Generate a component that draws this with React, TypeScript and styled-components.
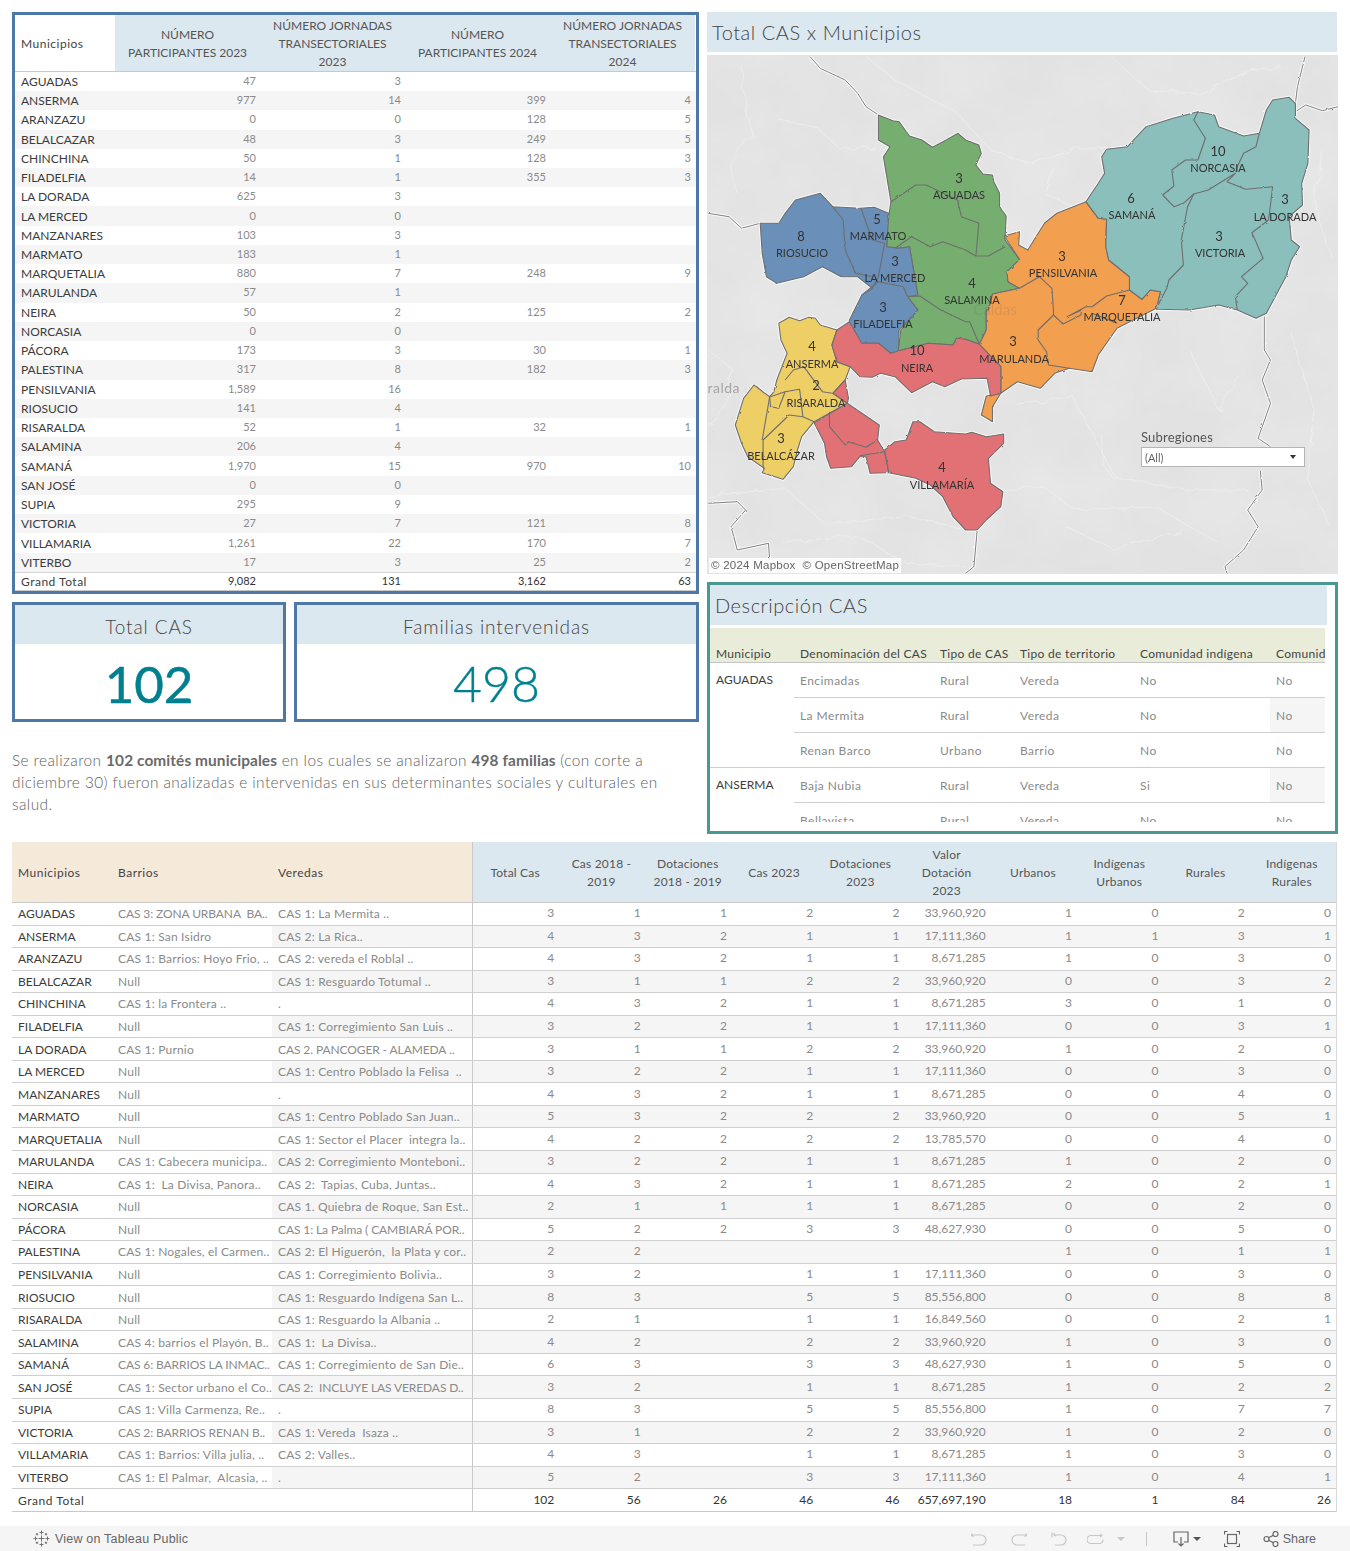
import React from 'react';
import styled, { createGlobalStyle } from 'styled-components';

const FONT = `Lato, "Open Sans", "Liberation Sans", sans-serif`;

const Global = createGlobalStyle`
  html, body { margin: 0; padding: 0; background: #fff; }
  body { font-family: ${FONT}; }
  #root { width: 1350px; height: 1551px; overflow: hidden; }
`;

const Page = styled.div`
  width: 1350px;
  height: 1551px;
  background: #fff;
  display: flex;
  flex-direction: column;
`;
const Content = styled.div`
  padding: 12px 12px 0 12px;
  flex: none;
`;
const TopGrid = styled.div`
  display: grid;
  grid-template-columns: 687px 631px;
  column-gap: 8px;
`;
const LeftColumn = styled.div`
  display: flex;
  flex-direction: column;
  gap: 8px;
`;
const RightColumn = styled.div`
  display: flex;
  flex-direction: column;
`;

/* ---------- participants table ---------- */
const BluePanel = styled.div`
  border: 3px solid #4e79a7;
  box-sizing: border-box;
  height: 582px;
  display: flex;
  flex-direction: column;
`;
const PartHeader = styled.div`
  display: grid;
  grid-template-columns: 100px repeat(4, 145px);
  height: 56.8px;
  border-bottom: 1px solid #c9c9c9;
  box-sizing: border-box;
  flex: none;
`;
const PartCorner = styled.div`
  display: flex;
  align-items: center;
  padding-left: 6px;
  font-size: 12px;
  letter-spacing: 0.5px;
  color: #444;
`;
const PartHeadCell = styled.div`
  background: #dce8ef;
  display: flex;
  align-items: center;
  justify-content: center;
  text-align: center;
  font-size: 12px;
  line-height: 18px;
  color: #555;
  padding-top: 2px;
  box-sizing: border-box;
`;
const PartRow = styled.div<{ $alt: boolean }>`
  display: grid;
  grid-template-columns: 100px repeat(4, 145px);
  height: 19.24px;
  flex: none;
  background: ${p => (p.$alt ? '#f5f5f5' : '#fff')};
  align-items: center;
`;
const PartName = styled.div<{ $total?: boolean }>`
  padding-left: 6px;
  font-size: 12px;
  letter-spacing: ${p => (p.$total ? '0.5px' : '0')};
  color: #3c3c3c;
  white-space: nowrap;
`;
const PartNum = styled.div`
  text-align: right;
  padding-right: 4px;
  padding-bottom: 2px;
  font-size: 11px;
  color: #8a8a8a;
`;
const PartTotal = styled.div`
  display: grid;
  grid-template-columns: 100px repeat(4, 145px);
  height: 19px;
  flex: none;
  align-items: center;
  border-top: 1px solid #d4d4d4;
  border-bottom: 1px solid #c9c9c9;
  box-sizing: border-box;
`;
const PartTotalNum = styled(PartNum)`
  color: #333;
`;

/* ---------- KPI ---------- */
const KpiRow = styled.div`
  display: grid;
  grid-template-columns: 274px 405px;
  column-gap: 8px;
`;
const KpiCard = styled.div`
  border: 3px solid #4e79a7;
  box-sizing: border-box;
  height: 120px;
  display: flex;
  flex-direction: column;
`;
const KpiTitle = styled.div`
  height: 39px;
  padding-top: 4px;
  box-sizing: border-box;
  background: #dce8ef;
  display: flex;
  align-items: center;
  justify-content: center;
  font-size: 19px;
  font-weight: 300;
  color: #444;
  letter-spacing: 0.9px;
`;
const KpiValue = styled.div<{ $strong?: boolean }>`
  flex: 1;
  display: flex;
  align-items: center;
  justify-content: center;
  padding-top: 3px;
  font-size: ${p => (p.$strong ? 51 : 50)}px;
  color: #00808f;
  font-weight: ${p => (p.$strong ? 400 : 300)};
  -webkit-text-stroke: ${p => (p.$strong ? '0.5px #00808f' : '0.4px #00808f')};
`;
const Paragraph = styled.p`
  margin: 19px 0 0;
  font-size: 15.4px;
  font-weight: 300;
  line-height: 22px;
  letter-spacing: 0.42px;
  color: #606060;
  b { font-weight: 700; color: #6a6a6a; letter-spacing: 0.1px; }
`;

/* ---------- map ---------- */
const TitleBar = styled.div`
  height: 40px;
  background: #dce8ef;
  display: flex;
  align-items: center;
  padding-left: 5px;
  font-size: 20px;
  font-weight: 300;
  color: #444;
  letter-spacing: 0.55px;
  margin-right: 1px;
`;
const MapFrame = styled.div`
  position: relative;
  height: 519px;
  margin-top: 3px;
  background: #e4e4e4;
  overflow: hidden;
`;
const MapSvg = styled.svg`
  display: block;
  width: 631px;
  height: 519px;
`;
const FilterBox = styled.div`
  position: absolute;
  left: 434px;
  top: 374px;
  width: 164px;
`;
const FilterLabel = styled.div`
  font-size: 13px;
  color: #555;
  line-height: 17px;
  margin-bottom: 1px;
  letter-spacing: 0.2px;
`;
const FilterSelect = styled.div`
  height: 20px;
  border: 1px solid #b4b4b4;
  background: #fff;
  box-sizing: border-box;
  display: flex;
  align-items: center;
  justify-content: space-between;
  padding: 0 8px 0 3px;
  font-size: 11px;
  color: #666;
`;
const Caret = styled.span`
  width: 0;
  height: 0;
  border-left: 3.5px solid transparent;
  border-right: 3.5px solid transparent;
  border-top: 4px solid #333;
`;
const Attribution = styled.div`
  position: absolute;
  left: 2px;
  bottom: 1px;
  height: 15px;
  line-height: 15px;
  padding: 0 2px;
  background: rgba(255, 255, 255, 0.85);
  font-family: "Liberation Sans", Arial, sans-serif;
  font-size: 11.5px;
  letter-spacing: 0.25px;
  color: #666;
  white-space: pre;
`;

/* ---------- description ---------- */
const TealPanel = styled.div`
  margin-top: 8px;
  height: 252px;
  border: 3px solid #499894;
  box-sizing: border-box;
  display: flex;
  flex-direction: column;
`;
const DescTitle = styled.div`
  height: 40px;
  width: 617px;
  background: #dce8ef;
  display: flex;
  align-items: center;
  padding-left: 5px;
  padding-bottom: 1px;
  box-sizing: border-box;
  font-size: 20px;
  font-weight: 300;
  color: #444;
  letter-spacing: 0.55px;
  flex: none;
`;
const DescViewport = styled.div`
  margin-top: 3px;
  width: 615px;
  height: 194px;
  overflow: hidden;
  flex: none;
`;
const DescHead = styled.div`
  display: grid;
  grid-template-columns: 84px 140px 80px 120px 136px 55px;
  height: 35px;
  background: #e8ecd9;
  border-bottom: 1px solid #c4c4c4;
  box-sizing: border-box;
  align-items: end;
`;
const DescHeadCell = styled.div`
  padding: 0 0 0 6px;
  font-size: 12px;
  line-height: 16px;
  letter-spacing: 0.3px;
  color: #444;
  white-space: nowrap;
  overflow: hidden;
`;
const DescGroup = styled.div`
  display: grid;
  grid-template-columns: 84px 531px;
  border-bottom: 1px solid #cfcfcf;
`;
const DescMuni = styled.div`
  padding: 9px 0 0 6px;
  font-size: 12px;
  line-height: 16px;
  color: #3c3c3c;
`;
const DescLine = styled.div`
  display: grid;
  grid-template-columns: 140px 80px 120px 136px 55px;
  height: 35px;
  box-sizing: border-box;
  border-bottom: 1px solid #cfcfcf;
  &:last-child { border-bottom: none; height: 34px; }
`;
const DescCell = styled.div<{ $shade?: boolean }>`
  display: flex;
  align-items: center;
  padding-left: 6px;
  font-size: 12px;
  letter-spacing: 0.45px;
  color: #8a8a8a;
  background: ${p => (p.$shade ? '#f5f5f5' : 'transparent')};
  white-space: nowrap;
`;

/* ---------- bottom table ---------- */
const BigTable = styled.div`
  margin-top: 8px;
  width: 1325px;
  border-bottom: 1px solid #c9c9c9;
  border-right: 1px solid #d9d9d9;
  box-sizing: border-box;
`;
const BIG_COLS = '100px 160px 200px 1px repeat(10, 86.3px)';
const BigHead = styled.div`
  display: grid;
  grid-template-columns: ${BIG_COLS};
  height: 61px;
  border-bottom: 1px solid #c9c9c9;
  box-sizing: border-box;
`;
const BigHeadDim = styled.div`
  background: #f5e9d9;
  display: flex;
  align-items: center;
  padding-left: 6px;
  font-size: 12px;
  letter-spacing: 0.5px;
  color: #444;
`;
const BigHeadMeasure = styled.div`
  background: #dce8ef;
  display: flex;
  align-items: center;
  justify-content: center;
  text-align: center;
  padding: 2px 4px 0 2px;
  font-size: 12px;
  line-height: 18px;
  letter-spacing: 0.2px;
  color: #555;
  white-space: nowrap;
  box-sizing: border-box;
`;
const VRule = styled.div`
  background: #c9c9c9;
`;
const BigRow = styled.div`
  display: grid;
  grid-template-columns: ${BIG_COLS};
  height: 22.56px;
  box-sizing: border-box;
  border-bottom: 1px solid #cfcfcf;
`;
const BigName = styled.div<{ $total?: boolean }>`
  display: flex;
  align-items: center;
  padding-left: 6px;
  font-size: 12px;
  letter-spacing: ${p => (p.$total ? '0.55px' : '0')};
  color: #3c3c3c;
  white-space: pre;
  overflow: hidden;
`;
const BigText = styled.div<{ $shade?: boolean; $caps?: boolean }>`
  display: flex;
  align-items: center;
  padding-left: 6px;
  font-size: 12px;
  letter-spacing: ${p => (p.$caps ? '-0.1px' : '0.2px')};
  color: #8a8a8a;
  white-space: pre;
  overflow: hidden;
  background: ${p => (p.$shade ? '#f5f5f5' : 'transparent')};
`;
const BigNum = styled.div<{ $shade?: boolean }>`
  display: flex;
  align-items: center;
  justify-content: flex-end;
  padding-right: 5px;
  padding-bottom: 2px;
  font-size: 12px;
  color: #8a8a8a;
  background: ${p => (p.$shade ? '#f5f5f5' : 'transparent')};
`;
const BigTotalRow = styled.div`
  display: grid;
  grid-template-columns: ${BIG_COLS};
  height: 22px;
  box-sizing: border-box;
`;
const BigTotalLabel = styled(BigName)`
  grid-column: span 3;
`;
const BigTotalNum = styled(BigNum)`
  color: #333;
`;

/* ---------- footer ---------- */
const Footer = styled.div`
  margin-top: 14px;
  height: 26px;
  background: #f5f5f5;
  display: flex;
  align-items: center;
  justify-content: space-between;
  padding: 0 34px 1px 33px;
  box-sizing: border-box;
  flex: none;
`;
const FooterLink = styled.div`
  display: flex;
  align-items: center;
  gap: 5px;
  font-family: "Liberation Sans", Arial, sans-serif;
  font-size: 12.5px;
  letter-spacing: 0.2px;
  color: #666;
`;
const FooterTools = styled.div`
  display: flex;
  align-items: center;
`;
const Tool = styled.span<{ $gap: number; $dark?: boolean }>`
  display: flex;
  margin-left: ${p => p.$gap}px;
  color: ${p => (p.$dark ? '#666' : '#c8c8c8')};
`;
const ToolCaret = styled.span<{ $dark?: boolean }>`
  margin-left: ${p => (p.$dark ? 4 : 13)}px;
  width: 0;
  height: 0;
  border-left: 4px solid transparent;
  border-right: 4px solid transparent;
  border-top: 4px solid ${p => (p.$dark ? '#555' : '#c8c8c8')};
`;
const Divider = styled.span`
  margin-left: 21px;
  width: 1px;
  height: 14px;
  background: #c8c8c8;
`;
const ShareText = styled.span`
  margin-left: 4px;
  font-family: "Liberation Sans", Arial, sans-serif;
  font-size: 12.5px;
  color: #666;
`;

/* ---------- data ---------- */
const partRows: string[][] = [
  ['AGUADAS', '47', '3', '', ''],
  ['ANSERMA', '977', '14', '399', '4'],
  ['ARANZAZU', '0', '0', '128', '5'],
  ['BELALCAZAR', '48', '3', '249', '5'],
  ['CHINCHINA', '50', '1', '128', '3'],
  ['FILADELFIA', '14', '1', '355', '3'],
  ['LA DORADA', '625', '3', '', ''],
  ['LA MERCED', '0', '0', '', ''],
  ['MANZANARES', '103', '3', '', ''],
  ['MARMATO', '183', '1', '', ''],
  ['MARQUETALIA', '880', '7', '248', '9'],
  ['MARULANDA', '57', '1', '', ''],
  ['NEIRA', '50', '2', '125', '2'],
  ['NORCASIA', '0', '0', '', ''],
  ['PÁCORA', '173', '3', '30', '1'],
  ['PALESTINA', '317', '8', '182', '3'],
  ['PENSILVANIA', '1,589', '16', '', ''],
  ['RIOSUCIO', '141', '4', '', ''],
  ['RISARALDA', '52', '1', '32', '1'],
  ['SALAMINA', '206', '4', '', ''],
  ['SAMANÁ', '1,970', '15', '970', '10'],
  ['SAN JOSÉ', '0', '0', '', ''],
  ['SUPIA', '295', '9', '', ''],
  ['VICTORIA', '27', '7', '121', '8'],
  ['VILLAMARIA', '1,261', '22', '170', '7'],
  ['VITERBO', '17', '3', '25', '2'],
];
const partHeads = [
  ['NÚMERO', 'PARTICIPANTES 2023'],
  ['NÚMERO JORNADAS', 'TRANSECTORIALES', '2023'],
  ['NÚMERO', 'PARTICIPANTES 2024'],
  ['NÚMERO JORNADAS', 'TRANSECTORIALES', '2024'],
];

const descGroups = [
  {
    name: 'AGUADAS',
    lines: [
      ['Encimadas', 'Rural', 'Vereda', 'No', 'No', ''],
      ['La Mermita', 'Rural', 'Vereda', 'No', 'No', 's'],
      ['Renan Barco', 'Urbano', 'Barrio', 'No', 'No', ''],
    ],
  },
  {
    name: 'ANSERMA',
    lines: [
      ['Baja Nubia', 'Rural', 'Vereda', 'Si', 'No', 's'],
      ['Bellavista', 'Rural', 'Vereda', 'No', 'No', ''],
    ],
  },
];

const bigHeads = [
  ['Total Cas'],
  ['Cas 2018 -', '2019'],
  ['Dotaciones', '2018 - 2019'],
  ['Cas 2023'],
  ['Dotaciones', '2023'],
  ['Valor', 'Dotación', '2023'],
  ['Urbanos'],
  ['Indígenas', 'Urbanos'],
  ['Rurales'],
  ['Indígenas', 'Rurales'],
];
const bigRows: string[][] = [
  ['AGUADAS', 'CAS 3: ZONA URBANA  BA..', 'CAS 1: La Mermita ..', '3', '1', '1', '2', '2', '33,960,920', '1', '0', '2', '0'],
  ['ANSERMA', 'CAS 1: San Isidro', 'CAS 2: La Rica..', '4', '3', '2', '1', '1', '17,111,360', '1', '1', '3', '1'],
  ['ARANZAZU', 'CAS 1: Barrios: Hoyo Frio, ..', 'CAS 2: vereda el Roblal ..', '4', '3', '2', '1', '1', '8,671,285', '1', '0', '3', '0'],
  ['BELALCAZAR', 'Null', 'CAS 1: Resguardo Totumal ..', '3', '1', '1', '2', '2', '33,960,920', '0', '0', '3', '2'],
  ['CHINCHINA', 'CAS 1: la Frontera ..', '.', '4', '3', '2', '1', '1', '8,671,285', '3', '0', '1', '0'],
  ['FILADELFIA', 'Null', 'CAS 1: Corregimiento San Luis ..', '3', '2', '2', '1', '1', '17,111,360', '0', '0', '3', '1'],
  ['LA DORADA', 'CAS 1: Purnio', 'CAS 2. PANCOGER - ALAMEDA ..', '3', '1', '1', '2', '2', '33,960,920', '1', '0', '2', '0'],
  ['LA MERCED', 'Null', 'CAS 1: Centro Poblado la Felisa  ..', '3', '2', '2', '1', '1', '17,111,360', '0', '0', '3', '0'],
  ['MANZANARES', 'Null', '.', '4', '3', '2', '1', '1', '8,671,285', '0', '0', '4', '0'],
  ['MARMATO', 'Null', 'CAS 1: Centro Poblado San Juan..', '5', '3', '2', '2', '2', '33,960,920', '0', '0', '5', '1'],
  ['MARQUETALIA', 'Null', 'CAS 1: Sector el Placer  integra la..', '4', '2', '2', '2', '2', '13,785,570', '0', '0', '4', '0'],
  ['MARULANDA', 'CAS 1: Cabecera municipa..', 'CAS 2: Corregimiento Monteboni..', '3', '2', '2', '1', '1', '8,671,285', '1', '0', '2', '0'],
  ['NEIRA', 'CAS 1:  La Divisa, Panora..', 'CAS 2:  Tapias, Cuba, Juntas..', '4', '3', '2', '1', '1', '8,671,285', '2', '0', '2', '1'],
  ['NORCASIA', 'Null', 'CAS 1. Quiebra de Roque, San Est..', '2', '1', '1', '1', '1', '8,671,285', '0', '0', '2', '0'],
  ['PÁCORA', 'Null', 'CAS 1: La Palma ( CAMBIARÁ POR..', '5', '2', '2', '3', '3', '48,627,930', '0', '0', '5', '0'],
  ['PALESTINA', 'CAS 1: Nogales, el Carmen..', 'CAS 2: El Higuerón,  la Plata y cor..', '2', '2', '', '', '', '', '1', '0', '1', '1'],
  ['PENSILVANIA', 'Null', 'CAS 1: Corregimiento Bolivia..', '3', '2', '', '1', '1', '17,111,360', '0', '0', '3', '0'],
  ['RIOSUCIO', 'Null', 'CAS 1: Resguardo Indígena San L..', '8', '3', '', '5', '5', '85,556,800', '0', '0', '8', '8'],
  ['RISARALDA', 'Null', 'CAS 1: Resguardo la Albania ..', '2', '1', '', '1', '1', '16,849,560', '0', '0', '2', '1'],
  ['SALAMINA', 'CAS 4: barrios el Playón, B..', 'CAS 1:  La Divisa..', '4', '2', '', '2', '2', '33,960,920', '1', '0', '3', '0'],
  ['SAMANÁ', 'CAS 6: BARRIOS LA INMAC..', 'CAS 1: Corregimiento de San Die..', '6', '3', '', '3', '3', '48,627,930', '1', '0', '5', '0'],
  ['SAN JOSÉ', 'CAS 1: Sector urbano el Co..', 'CAS 2:  INCLUYE LAS VEREDAS D..', '3', '2', '', '1', '1', '8,671,285', '1', '0', '2', '2'],
  ['SUPIA', 'CAS 1: Villa Carmenza, Re..', '.', '8', '3', '', '5', '5', '85,556,800', '1', '0', '7', '7'],
  ['VICTORIA', 'CAS 2: BARRIOS RENAN B..', 'CAS 1: Vereda  Isaza ..', '3', '1', '', '2', '2', '33,960,920', '1', '0', '2', '0'],
  ['VILLAMARIA', 'CAS 1: Barrios: Villa julia, ..', 'CAS 2: Valles..', '4', '3', '', '1', '1', '8,671,285', '1', '0', '3', '0'],
  ['VITERBO', 'CAS 1: El Palmar,  Alcasia, ..', '.', '5', '2', '', '3', '3', '17,111,360', '1', '0', '4', '1'],
];
const bigTotal = ['102', '56', '26', '46', '46', '657,697,190', '18', '1', '84', '26'];
const isCaps = (s: string) => /[A-ZÁ]{4}/.test(s);

/* ---------- map drawing: traced points, N/S select the source band ---------- */
const pts = (s: string) => {
  let oy = 50;
  return s
    .trim()
    .split(/\s+/)
    .flatMap(tok => {
      if (tok === 'N') { oy = 50; return []; }
      if (tok === 'S') { oy = 310; return []; }
      const [x, y] = tok.split(',').map(Number);
      return [`${(700 + x / 2.41).toFixed(1)},${(oy + y / 3).toFixed(1)}`];
    })
    .join(' ');
};

const regions = [
  {
    fill: '#76ae6f',
    outer: `N 430,195 465,212 480,215 505,258 535,270 560,292 590,272 622,250 640,270 672,285 678,310 665,345 682,372 705,375 708,395 722,430 722,470 738,498 735,570 770,628 740,665 742,695 770,715 705,732 695,780 S 690,0 690,60 673,103 640,88 618,85 610,105 550,100 478,122 484,60 525,0 N 525,780 500,740 525,735 505,590 480,595 450,590 452,520 460,455 442,320 458,290 430,270`,
    lines: [
      `N 460,455 520,405 545,405 620,450 630,500 672,520 665,618`,
      `N 470,595 510,560 555,590 585,575 640,600 665,618 695,618 735,590`,
      `N 500,740 530,738 580,780 S 640,35 650,35 673,103`,
    ],
  },
  {
    fill: '#6a8fb8',
    outer: `N 145,520 190,520 205,490 230,450 290,430 320,470 385,475 420,472 455,490 450,590 480,595 505,590 525,735 500,740 525,780 S 525,0 480,60 478,122 460,130 430,100 390,100 360,50 360,30 N 390,735 415,715 380,680 340,680 295,650 250,680 185,700 160,680 150,610`,
    lines: [
      `N 320,470 345,510 350,600 375,670 415,680`,
      `N 388,475 415,570 445,580 430,680 415,715`,
      `N 390,735 430,695 490,710 500,740`,
    ],
  },
  {
    fill: '#f29f4f',
    outer: `N 733,558 770,545 768,585 790,600 830,520 860,490 930,455 960,505 980,508 978,590 985,630 1035,680 1035,720 1065,748 1085,720 1110,725 1100,775 S 1005,55 960,135 945,185 890,175 855,190 820,235 765,215 725,250 705,290 705,335 678,315 690,258 725,250 725,170 673,103 690,60 690,0 N 695,780 705,732 770,715 742,695 740,665 770,628`,
    lines: [
      `N 770,715 818,680 848,715 852,780 S 852,15 815,60 815,90 835,125 840,165 890,175`,
      `S 852,15 875,42 918,15 920,0 N 885,800 930,770 945,770 980,738 1035,720`,
      `S 945,10 1005,40`,
    ],
  },
  {
    fill: '#8bbfbb',
    outer: `N 930,455 960,400 975,370 968,320 980,298 1030,290 1075,230 1140,205 1200,185 1240,195 1250,230 1310,258 1348,250 1365,180 1380,150 1420,142 1435,160 1435,205 1468,240 1465,340 1450,400 1452,465 1420,500 1425,570 1445,590 1425,630 1412,680 1395,720 1365,790 1340,805 1295,780 1250,765 1180,780 1100,778 1110,725 1085,720 1065,748 1035,720 1035,680 985,630 978,590 980,508 960,505`,
    lines: [
      `N 1200,185 1190,210 1218,265 1200,330 1170,330 1137,360 1142,408 1115,435 1142,470 1165,460 1190,432 1225,420 1290,370 1270,395 1315,418 1380,410 1375,465 1370,510 1330,548 1357,625 1305,680 1320,700 1290,740 1295,780`,
      `N 1348,250 1340,290 1310,310 1295,350 1290,370`,
      `N 1190,432 1175,470 1160,570 1165,645 1130,690 1125,715 1100,775`,
    ],
  },
  {
    fill: '#eecf66',
    outer: `S 190,40 215,22 240,32 262,22 278,25 290,45 330,60 318,105 330,155 362,170 350,210 320,250 355,280 275,335 245,380 235,420 225,470 200,508 150,488 155,475 115,440 100,400 85,345 105,265 130,225 168,260 178,245 185,210 210,130 195,90`,
    lines: [
      `S 170,260 205,245 240,238 248,320 275,335`,
      `S 168,260 170,290 190,295 205,245`,
      `S 205,210 225,180 250,170 295,245 318,250`,
      `S 215,315 248,320`,
      `S 215,315 152,390 152,470 155,478`,
      `S 168,260 150,390`,
    ],
  },
  {
    fill: '#e27175',
    outer: `S 318,105 330,60 360,35 390,100 430,100 460,130 480,122 550,100 610,105 618,85 640,88 673,103 725,170 725,250 700,258 692,205 630,207 590,230 560,215 510,248 470,200 435,190 415,202 385,200 362,170 330,155`,
    lines: [],
  },
  {
    fill: '#e27175',
    outer: `S 350,210 358,265 355,280 400,318 432,345 428,390 445,425 455,488 410,490 400,440 385,440 365,470 315,475 305,440 300,400 275,338 355,280 320,250`,
    lines: [
      `S 312,305 312,350 350,405 358,395 400,412 428,390`,
      `S 385,437 445,425`,
    ],
  },
  {
    fill: '#e27175',
    outer: `S 445,420 470,395 497,390 513,335 530,335 565,365 640,372 655,367 690,380 732,372 732,400 695,445 700,520 730,545 725,590 690,630 668,660 640,660 610,620 585,560 555,525 520,505 455,488`,
    lines: [],
  },
];

const borders = [
  `N 265,20 290,55 350,90 380,130 400,170 430,195`,
  `N 20,490 70,500 100,535 145,520`,
  `N 1458,20 1440,110 1435,160`,
  `N 1435,185 1460,165 1500,182 1538,170`,
  `S 1360,20 1360,120 1375,150 1355,210 1375,280 1345,385 1375,410`,
  `S 1350,480 1355,540 1320,600 1345,650 1310,720 1265,770 1270,790`,
  `S 20,580 90,575 110,600 75,650 90,720 165,700 168,750`,
  `S 668,660 660,770 640,790`,
];
const rivers = [
  `N 100,40 110,180 130,260 70,330 90,430`,
  `N 400,20 470,90 620,190 700,300 800,340 900,300 980,290`,
  `N 1000,30 1080,120 1200,130 1320,60 1400,50`,
  `N 190,210 280,230 340,300 420,290`,
  `N 850,350 830,430 900,470`,
  `N 1500,300 1480,450 1520,620`,
  `S 20,120 80,180 60,300 20,350`,
  `S 20,560 120,545 200,530 300,640 500,620 640,660`,
  `S 200,700 380,680 500,760 640,770`,
  `S 760,280 900,260 1000,500 1180,540 1320,540`,
  `S 730,540 830,530 900,600 1100,590 1250,700`,
  `S 970,380 975,470 1000,510`,
  `S 1180,120 1250,300 1300,200`,
  `S 1420,60 1480,300 1460,500 1520,650`,
  `S 880,650 1000,720 1170,660`,
];

const labels: [string, string, number, number, number, number][] = [
  ['3', 'AGUADAS', 959, 178, 959, 195],
  ['8', 'RIOSUCIO', 801, 236, 802, 253],
  ['5', 'MARMATO', 877, 219, 878, 236],
  ['3', 'LA MERCED', 895, 261, 895, 278],
  ['4', 'SALAMINA', 972, 283, 972, 300],
  ['3', 'FILADELFIA', 883, 307, 883, 324],
  ['3', 'PENSILVANIA', 1062, 256, 1063, 273],
  ['7', 'MARQUETALIA', 1122, 300, 1122, 317],
  ['3', 'MARULANDA', 1013, 341, 1014, 359],
  ['10', 'NORCASIA', 1218, 151, 1218, 168],
  ['6', 'SAMANÁ', 1131, 198, 1132, 215],
  ['3', 'LA DORADA', 1285, 199, 1285, 217],
  ['3', 'VICTORIA', 1219, 236, 1220, 253],
  ['4', 'ANSERMA', 812, 346, 812, 364],
  ['2', 'RISARALDA', 816, 385, 816, 403],
  ['3', 'BELALCÁZAR', 781, 438, 781, 456],
  ['10', 'NEIRA', 917, 350, 917, 368],
  ['4', 'VILLAMARÍA', 942, 467, 942, 485],
];

const MapDrawing = () => (
  <MapSvg viewBox="707 55 631 519">
    <defs>
      <filter id="wiggle" filterUnits="userSpaceOnUse" x="707" y="55" width="631" height="519">
        <feTurbulence type="fractalNoise" baseFrequency="0.06" numOctaves="3" seed="4" result="n" />
        <feDisplacementMap in="SourceGraphic" in2="n" scale="9" />
      </filter>
      <filter id="rough" filterUnits="userSpaceOnUse" x="707" y="55" width="631" height="519">
        <feTurbulence type="fractalNoise" baseFrequency="0.2" numOctaves="2" seed="7" result="n" />
        <feDisplacementMap in="SourceGraphic" in2="n" scale="2" />
      </filter>
      <filter id="clouds" filterUnits="userSpaceOnUse" x="707" y="55" width="631" height="519">
        <feTurbulence type="fractalNoise" baseFrequency="0.015" numOctaves="4" seed="11" />
        <feColorMatrix values="0 0 0 0 1  0 0 0 0 1  0 0 0 0 1  0.28 0 0 0 -0.08" />
      </filter>
    </defs>
    <rect x="707" y="55" width="631" height="519" fill="#e2e2e2" />
    <rect x="707" y="55" width="631" height="519" filter="url(#clouds)" />
    <g filter="url(#wiggle)" opacity="0.8">
      {rivers.map((r, i) => (
        <polyline key={i} points={pts(r)} fill="none" stroke="#f0f0f0" strokeWidth="0.9" strokeLinejoin="round" />
      ))}
    </g>
    <g filter="url(#rough)">
      {borders.map((b, i) => (
        <g key={i}>
          <polyline points={pts(b)} fill="none" stroke="#fff" strokeWidth="3" strokeLinejoin="round" opacity="0.8" />
          <polyline points={pts(b)} fill="none" stroke="#808080" strokeWidth="1" strokeLinejoin="round" />
        </g>
      ))}
      {regions.map((r, i) => (
        <polygon key={i} points={pts(r.outer)} fill="none" stroke="#fff" strokeWidth="3" opacity="0.8" strokeLinejoin="round" />
      ))}
      {regions.map((r, i) => (
        <g key={i}>
          <polygon points={pts(r.outer)} fill={r.fill} stroke="#6e6e6e" strokeWidth="1.1" strokeLinejoin="round" />
          {r.lines.map((l, j) => (
            <polyline key={j} points={pts(l)} fill="none" stroke="#6e6e6e" strokeWidth="1.1" strokeLinejoin="round" />
          ))}
        </g>
      ))}
    </g>
    <text x="995" y="315" fontSize="15" textAnchor="middle" fill="#555" opacity="0.14" fontFamily={FONT}>Caldas</text>
    <text x="740" y="393" fontSize="14" textAnchor="end" fill="#a5a5a5" fontFamily={FONT} letterSpacing="0.5">ralda</text>
    {labels.map(([n, name, nx, ny, tx, ty]) => (
      <g key={name} fontFamily={FONT} textAnchor="middle" fill="#333">
        <text x={nx} y={ny + 5} fontSize="13">{n}</text>
        <text x={tx} y={ty + 4} fontSize="11">{name}</text>
      </g>
    ))}
  </MapSvg>
);

/* ---------- footer icons ---------- */
const TableauMark = () => (
  <svg width="17" height="17" viewBox="0 0 17 17" stroke="#666" strokeWidth="0.9" fill="none">
    <path d="M8.5 5.5v6M5.5 8.5h6M8.5 0.5v4M6.5 2.5h4M8.5 12.5v4M6.5 14.5h4M2.5 6.5v4M0.5 8.5h4M14.5 6.5v4M12.5 8.5h4M4 3v2.4M2.8 4.2h2.4M13 3v2.4M11.8 4.2h2.4M4 11.6V14M2.8 12.8h2.4M13 11.6V14M11.8 12.8h2.4" />
  </svg>
);
const IconUndo = () => (
  <svg width="16" height="14" viewBox="0 0 16 14" fill="none" stroke="currentColor" strokeWidth="1.2">
    <path d="M1 1.5l-0.5 2 2 1M1 3h9a5 5 0 0 1 0 10H2" />
  </svg>
);
const IconRedo = () => (
  <svg width="16" height="14" viewBox="0 0 16 14" fill="none" stroke="currentColor" strokeWidth="1.2">
    <path d="M15 1.5l0.5 2-2 1M15 3H6a5 5 0 0 0 0 10h8" />
  </svg>
);
const IconRevert = () => (
  <svg width="16" height="14" viewBox="0 0 16 14" fill="none" stroke="currentColor" strokeWidth="1.2">
    <path d="M1 0.5v5M3.5 1l-0.5 2 2 1M3 3h7a5 5 0 0 1 0 10H4" />
  </svg>
);
const IconRefresh = () => (
  <svg width="17" height="12" viewBox="0 0 17 12" fill="none" stroke="currentColor" strokeWidth="1.2">
    <path d="M13 1l2 1.5-2 1.5M14 2.5H4a3.5 3.5 0 0 0 0 8h9a3.5 3.5 0 0 0 3-4" />
  </svg>
);
const IconDownload = () => (
  <svg width="16" height="16" viewBox="0 0 16 16" fill="none" stroke="currentColor" strokeWidth="1.2">
    <path d="M5 11H1V1h14v10h-4M8 6v9M5.5 12.5L8 15l2.5-2.5" />
  </svg>
);
const IconFull = () => (
  <svg width="16" height="16" viewBox="0 0 16 16" fill="none" stroke="currentColor" strokeWidth="1.2">
    <path d="M0.5 3.5v-3h3M12.5 0.5h3v3M15.5 12.5v3h-3M3.5 15.5h-3v-3" />
    <rect x="3.5" y="3.5" width="9" height="9" />
  </svg>
);
const IconShare = () => (
  <svg width="16" height="16" viewBox="0 0 16 16" fill="none" stroke="currentColor" strokeWidth="1.2">
    <circle cx="3.5" cy="8" r="2.5" />
    <circle cx="12.5" cy="3" r="2.5" />
    <circle cx="12.5" cy="13" r="2.5" />
    <path d="M5.7 6.8l4.6-2.6M5.7 9.2l4.6 2.6" />
  </svg>
);

const HeadLines = ({ lines }: { lines: string[] }) => (
  <div>
    {lines.map(l => (
      <div key={l}>{l}</div>
    ))}
  </div>
);

export default function App() {
  return (
    <Page>
      <Global />
      <Content>
        <TopGrid>
          <LeftColumn>
            <BluePanel>
              <PartHeader>
                <PartCorner>Municipios</PartCorner>
                {partHeads.map((h, i) => (
                  <PartHeadCell key={i}>
                    <HeadLines lines={h} />
                  </PartHeadCell>
                ))}
              </PartHeader>
              {partRows.map((r, i) => (
                <PartRow key={r[0]} $alt={i % 2 === 1}>
                  <PartName>{r[0]}</PartName>
                  {r.slice(1).map((v, j) => (
                    <PartNum key={j}>{v}</PartNum>
                  ))}
                </PartRow>
              ))}
              <PartTotal>
                <PartName $total>Grand Total</PartName>
                <PartTotalNum>9,082</PartTotalNum>
                <PartTotalNum>131</PartTotalNum>
                <PartTotalNum>3,162</PartTotalNum>
                <PartTotalNum>63</PartTotalNum>
              </PartTotal>
            </BluePanel>
            <KpiRow>
              <KpiCard>
                <KpiTitle>Total CAS</KpiTitle>
                <KpiValue $strong>102</KpiValue>
              </KpiCard>
              <KpiCard>
                <KpiTitle>Familias intervenidas</KpiTitle>
                <KpiValue>498</KpiValue>
              </KpiCard>
            </KpiRow>
            <Paragraph>
              Se realizaron <b>102 comités municipales</b> en los cuales se analizaron <b>498 familias</b> (con corte a
              <br />
              diciembre 30) fueron analizadas e intervenidas en sus determinantes sociales y culturales en
              <br />
              salud.
            </Paragraph>
          </LeftColumn>
          <RightColumn>
            <TitleBar>Total CAS x Municipios</TitleBar>
            <MapFrame>
              <MapDrawing />
              <FilterBox>
                <FilterLabel>Subregiones</FilterLabel>
                <FilterSelect>
                  (All)
                  <Caret />
                </FilterSelect>
              </FilterBox>
              <Attribution>© 2024 Mapbox  © OpenStreetMap</Attribution>
            </MapFrame>
            <TealPanel>
              <DescTitle>Descripción CAS</DescTitle>
              <DescViewport>
                <DescHead>
                  <DescHeadCell>Municipio</DescHeadCell>
                  <DescHeadCell>Denominación del CAS</DescHeadCell>
                  <DescHeadCell>Tipo de CAS</DescHeadCell>
                  <DescHeadCell>Tipo de territorio</DescHeadCell>
                  <DescHeadCell>Comunidad indígena</DescHeadCell>
                  <DescHeadCell>Comunid</DescHeadCell>
                </DescHead>
                {descGroups.map(g => (
                  <DescGroup key={g.name}>
                    <DescMuni>{g.name}</DescMuni>
                    <div>
                      {g.lines.map(l => (
                        <DescLine key={l[0]}>
                          <DescCell>{l[0]}</DescCell>
                          <DescCell>{l[1]}</DescCell>
                          <DescCell>{l[2]}</DescCell>
                          <DescCell>{l[3]}</DescCell>
                          <DescCell $shade={l[5] === 's'}>{l[4]}</DescCell>
                        </DescLine>
                      ))}
                    </div>
                  </DescGroup>
                ))}
              </DescViewport>
            </TealPanel>
          </RightColumn>
        </TopGrid>
        <BigTable>
          <BigHead>
            <BigHeadDim>Municipios</BigHeadDim>
            <BigHeadDim>Barrios</BigHeadDim>
            <BigHeadDim>Veredas</BigHeadDim>
            <VRule />
            {bigHeads.map((h, i) => (
              <BigHeadMeasure key={i}>
                <HeadLines lines={h} />
              </BigHeadMeasure>
            ))}
          </BigHead>
          {bigRows.map((r, i) => {
            const shade = i % 2 === 1;
            return (
              <BigRow key={r[0]}>
                <BigName>{r[0]}</BigName>
                <BigText $caps={isCaps(r[1])}>{r[1]}</BigText>
                <BigText $shade={shade} $caps={isCaps(r[2])}>{r[2]}</BigText>
                <VRule />
                {r.slice(3).map((v, j) => (
                  <BigNum key={j} $shade={shade}>{v}</BigNum>
                ))}
              </BigRow>
            );
          })}
          <BigTotalRow>
            <BigTotalLabel $total>Grand Total</BigTotalLabel>
            <VRule />
            {bigTotal.map((v, i) => (
              <BigTotalNum key={i}>{v}</BigTotalNum>
            ))}
          </BigTotalRow>
        </BigTable>
      </Content>
      <Footer>
        <FooterLink>
          <TableauMark />
          View on Tableau Public
        </FooterLink>
        <FooterTools>
          <Tool $gap={0}><IconUndo /></Tool>
          <Tool $gap={24}><IconRedo /></Tool>
          <Tool $gap={24}><IconRevert /></Tool>
          <Tool $gap={20}><IconRefresh /></Tool>
          <ToolCaret />
          <Divider />
          <Tool $gap={26} $dark><IconDownload /></Tool>
          <ToolCaret $dark />
          <Tool $gap={23} $dark><IconFull /></Tool>
          <Tool $gap={23} $dark><IconShare /></Tool>
          <ShareText>Share</ShareText>
        </FooterTools>
      </Footer>
    </Page>
  );
}
